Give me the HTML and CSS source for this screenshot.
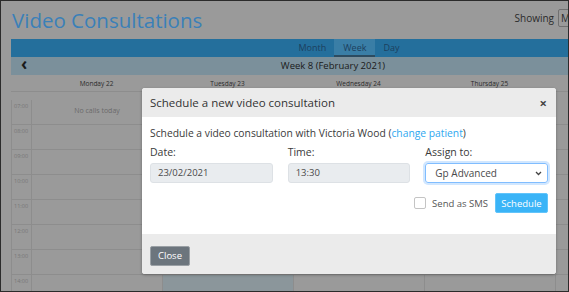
FILE: index.html
```html
<!DOCTYPE html>
<html lang="en">
<head>
    <meta charset="UTF-8">
    <meta name="viewport" content="width=device-width, initial-scale=1.0">
    <title>Video Consultations</title>
    <link rel="stylesheet" href="styles.css">
</head>
<body>
    <div class="frame">
        <div class="page">
            <header class="page-header">
                <h1>Video Consultations</h1>
                <div class="showing">
                    <span>Showing</span>
                    <div class="showing-select">My</div>
                </div>
            </header>

            <section class="calendar">
                <nav class="view-tabs">
                    <span class="tab">Month</span>
                    <span class="tab active">Week</span>
                    <span class="tab">Day</span>
                </nav>
                <div class="week-bar">
                    <span class="prev">&lsaquo;</span>
                    <span class="week-title">Week 8 (February 2021)</span>
                </div>
                <div class="cal-grid" id="cal-grid">
                    <div class="cell head"></div>
                    <div class="cell head">Monday 22</div>
                    <div class="cell head">Tuesday 23</div>
                    <div class="cell head">Wednesday 24</div>
                    <div class="cell head">Thursday 25</div>
                    <div class="cell head"></div>
                    <!-- time rows are added below -->
                </div>
            </section>
        </div>

        <div class="modal">
            <div class="modal-header">
                <span>Schedule a new video consultation</span>
                <span class="modal-close">&times;</span>
            </div>
            <div class="modal-body">
                <p class="intro">Schedule a video consultation with Victoria Wood (<a href="#">change patient</a>)</p>
                <div class="fields">
                    <div class="field">
                        <label>Date:</label>
                        <div class="input readonly">23/02/2021</div>
                    </div>
                    <div class="field">
                        <label>Time:</label>
                        <div class="input readonly">13:30</div>
                    </div>
                    <div class="field">
                        <label>Assign to:</label>
                        <div class="input select">
                            <span>Gp Advanced</span>
                            <svg width="7" height="5" viewBox="0 0 7 5"><path d="M1 1l2.5 2.5L6 1" fill="none" stroke="#444" stroke-width="1.3"/></svg>
                        </div>
                    </div>
                </div>
                <div class="actions">
                    <span class="checkbox"></span>
                    <span class="sms-label">Send as SMS</span>
                    <button class="btn btn-primary">Schedule</button>
                </div>
            </div>
            <div class="modal-footer">
                <button class="btn btn-secondary">Close</button>
            </div>
        </div>
    </div>

    <script>
        const grid = document.getElementById('cal-grid');
        const hours = ['07:00', '08:00', '09:00', '10:00', '11:00', '12:00', '13:00', '14:00'];
        hours.forEach((hour, row) => {
            grid.insertAdjacentHTML('beforeend', `<div class="cell time">${hour}</div>`);
            for (let day = 0; day < 5; day++) {
                const selected = day === 1 && row >= 6 ? ' selected' : '';
                const text = day === 0 && row === 0 ? 'No calls today' : '';
                grid.insertAdjacentHTML('beforeend', `<div class="cell slot${selected}">${text}</div>`);
            }
        });
    </script>
</body>
</html>
```

FILE: styles.css
```css
body {
    margin: 0;
    font-family: "Open Sans", "Noto Sans", sans-serif;
}
.frame {
    position: relative;
    width: 569px;
    height: 292px;
    box-sizing: border-box;
    border: 1px solid #2b2b2b;
    background-color: #9a9a9a;
    overflow: hidden;
}
.page {
    width: 646px;
    padding-left: 10px;
}
.page-header {
    display: flex;
    justify-content: space-between;
    align-items: center;
    height: 38px;
}
.page-header h1 {
    margin: 0;
    font-weight: 400;
    font-size: 20.5px;
    color: #3a80b8;
    padding-left: 1px;
}
.showing {
    display: flex;
    align-items: center;
    gap: 4px;
    font-size: 10px;
    color: #2a2a2a;
    padding-bottom: 4px;
}
.showing-select {
    width: 95px;
    height: 16px;
    line-height: 16px;
    border: 1px solid #707070;
    border-radius: 2px;
    padding-left: 2px;
}
.view-tabs {
    display: flex;
    justify-content: center;
    padding-left: 30px;
    height: 18px;
    background-color: #246f9c;
}
.tab {
    padding: 0 8px;
    font-size: 9px;
    line-height: 18px;
    color: #1c3f5e;
}
.tab.active {
    background-color: #3a7ea6;
    box-shadow: inset 0 -2px 0 #2c4b60;
    padding: 0 9px;
}
.week-bar {
    position: relative;
    display: flex;
    justify-content: center;
    height: 18px;
    line-height: 18px;
    background-color: #7b909b;
    font-size: 9.5px;
    color: #1a1a1a;
}
.week-bar .prev {
    position: absolute;
    left: 10px;
    top: -2px;
    font-size: 17px;
    font-weight: 700;
}
.week-title {
    padding-right: 2px;
}
.cal-grid {
    display: grid;
    grid-template-columns: 20px repeat(4, 131px) 1fr;
    grid-auto-rows: 25px;
}
.cal-grid .cell {
    border-left: 1px solid #8d8d8d;
    border-bottom: 1px solid #8d8d8d;
    box-sizing: border-box;
}
.cell.head {
    height: 17px;
    border-left: none;
    text-align: center;
    font-size: 6.5px;
    line-height: 17px;
    color: #2a2a2a;
}
.cell.time {
    font-size: 5.5px;
    color: #767676;
    padding: 2px 0 0 2px;
}
.cell.slot {
    text-align: center;
    font-size: 7px;
    line-height: 22px;
    color: #6a6a6a;
}
.cell.selected {
    background-color: #8b969b;
}
.modal {
    position: absolute;
    left: 141px;
    top: 87px;
    width: 414px;
    background-color: #fff;
    border-radius: 3px;
    overflow: hidden;
    box-shadow: 0 1px 3px rgba(0, 0, 0, 0.3);
}
.modal-header {
    display: flex;
    justify-content: space-between;
    align-items: center;
    height: 29px;
    padding: 0 9px 0 8px;
    background-color: #ebebeb;
    font-size: 11.5px;
    color: #333;
}
.modal-close {
    font-size: 13px;
    font-weight: 700;
    color: #444;
}
.modal-body {
    padding: 9px 8px 21px;
}
.intro {
    margin: 0;
    font-size: 10.3px;
    line-height: 15px;
    color: #3a3a3a;
}
.intro a {
    color: #2da8f0;
    text-decoration: none;
}
.fields {
    display: grid;
    grid-template-columns: repeat(3, 1fr);
    gap: 15px;
    margin-top: 4px;
}
.field label {
    display: block;
    font-size: 10.5px;
    line-height: 14px;
    color: #3a3a3a;
}
.input {
    margin-top: 4px;
    height: 20px;
    box-sizing: border-box;
    border-radius: 3px;
    font-size: 9.5px;
    line-height: 18px;
    padding-left: 7px;
    color: #4a4a4a;
}
.input.readonly {
    background-color: #e9ecef;
    border: 1px solid #dde1e5;
}
.input.select {
    display: flex;
    justify-content: space-between;
    align-items: center;
    border: 1px solid #80bdff;
    box-shadow: 0 0 0 2px rgba(0, 123, 255, 0.18);
    padding: 0 5px 0 9px;
    font-size: 10px;
}
.actions {
    display: flex;
    justify-content: flex-end;
    align-items: center;
    margin-top: 10px;
    height: 20px;
}
.checkbox {
    width: 10px;
    height: 10px;
    border: 1px solid #c4c4c4;
    border-radius: 2px;
    margin-right: 6px;
}
.sms-label {
    font-size: 9.5px;
    color: #555;
    margin-right: 7px;
}
.btn {
    font-family: inherit;
    font-size: 9.5px;
    color: #fff;
    border-radius: 2px;
    cursor: pointer;
}
.btn-primary {
    height: 20px;
    width: 53px;
    padding: 0;
    background-color: #3ab4f7;
    border: 1px solid #62c4fa;
}
.modal-footer {
    padding: 8px;
    background-color: #ebebeb;
}
.btn-secondary {
    height: 20px;
    width: 40px;
    padding: 0;
    background-color: #6c757d;
    border: 1px solid #9aa0a5;
}
```
